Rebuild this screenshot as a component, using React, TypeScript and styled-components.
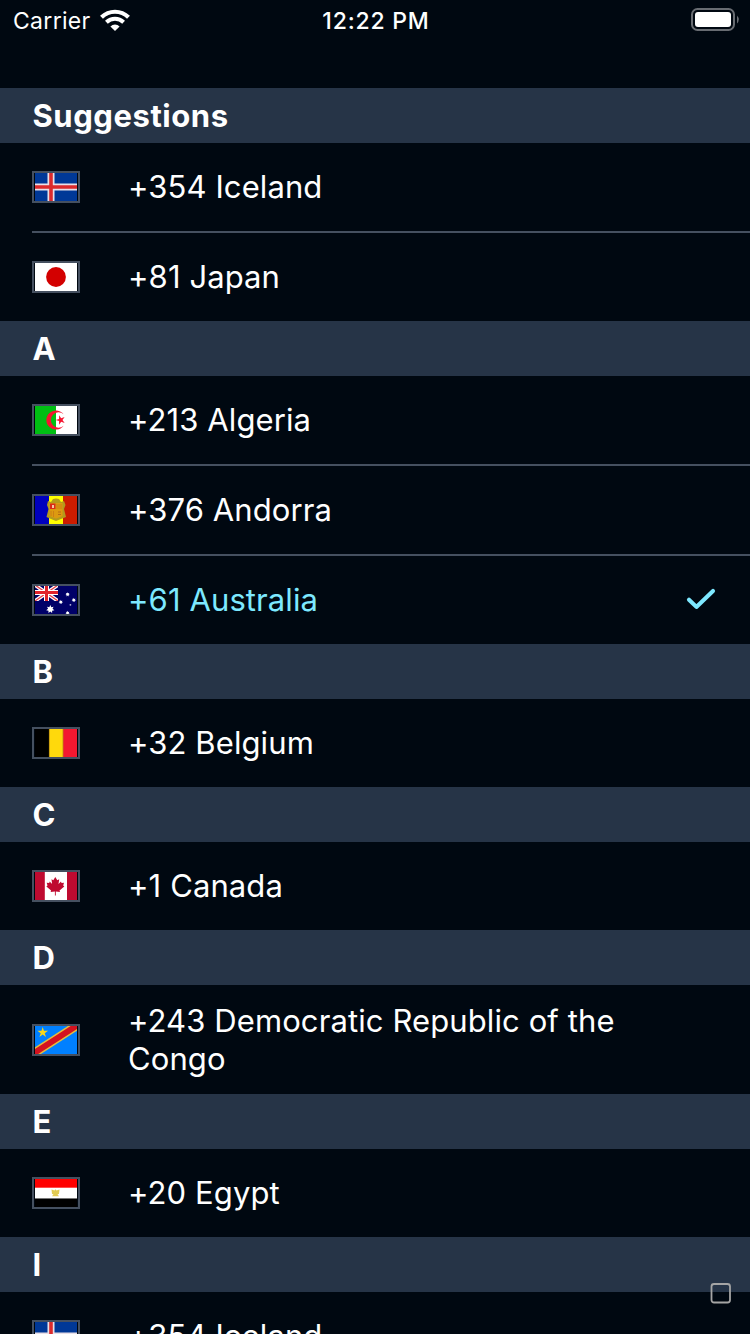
import React from "react";
import styled, { createGlobalStyle } from "styled-components";

const GlobalStyle = createGlobalStyle`
  html, body { margin: 0; background: #000811; overflow: hidden; }
  * { box-sizing: border-box; }
`;

const Screen = styled.main`
  width: 750px;
  height: 1334px;
  overflow: hidden;
  position: relative;
  background: #000811;
  color: #fff;
  font-family: Inter, "Liberation Sans", sans-serif;
`;

const StatusBar = styled.header`
  display: grid;
  grid-template-columns: 1fr auto 1fr;
  align-items: center;
  height: 40px;
  margin-bottom: 48px;
  padding: 0 11px 0 13px;
`;

const Carrier = styled.div`
  display: flex;
  align-items: center;
  gap: 9px;
  font-size: 23px;
  letter-spacing: 0.3px;
  line-height: 38px;
`;

const StatusText = styled.span`
  padding-top: 2px;
`;

const Clock = styled.div`
  padding-top: 2px;
  font-size: 23px;
  font-weight: 500;
  letter-spacing: 0.8px;
  line-height: 38px;
`;

const Battery = styled.svg`
  justify-self: end;
`;

const SectionTitle = styled.h2`
  margin: 0;
  height: 55px;
  padding: 0 32px 0 32.5px;
  background: #263447;
  font-size: 31px;
  font-weight: 700;
  letter-spacing: 0.55px;
  line-height: 55px;
`;

const Label = styled.span`
  flex: 1;
  font-size: 31px;
  line-height: 38px;
  letter-spacing: 0.1px;
`;

const Row = styled.li<{ $selected?: boolean }>`
  display: flex;
  align-items: center;
  min-height: 88px;
  padding: 16.5px 32px;
  color: ${(p) => (p.$selected ? "#7de8ff" : "#fff")};
`;

const List = styled.ul`
  margin: 0;
  padding: 0;
  list-style: none;
`;

const Separator = styled.li`
  height: 2px;
  margin-left: 32px;
  background: #455060;
`;

const FlagFrame = styled.span`
  display: flex;
  justify-content: center;
  width: 48px;
  height: 32px;
  margin-right: 48px;
  border: 2px solid #455060;
`;

const FlagSvg = styled.svg`
  display: block;
  width: 42px;
  height: 28px;
`;

const HomeBadge = styled.svg`
  position: absolute;
  left: 710px;
  top: 1282px;
`;

const starPoints = (cx: number, cy: number, outer: number, inner: number, n: number, turn = -90) =>
  Array.from({ length: n * 2 }, (_, i) => {
    const r = i % 2 ? inner : outer;
    const a = ((turn + (i * 180) / n) * Math.PI) / 180;
    return `${(cx + r * Math.cos(a)).toFixed(2)},${(cy + r * Math.sin(a)).toFixed(2)}`;
  }).join(" ");

const flags: Record<string, React.ReactNode> = {
  iceland: (
    <>
      <rect width="42" height="28" fill="#003897" />
      <path d="M16 0V28M0 14H42" stroke="#e8dfe8" strokeWidth="7" />
      <path d="M16 0V28M0 14H42" stroke="#dc2a2c" strokeWidth="3.6" />
    </>
  ),
  japan: (
    <>
      <rect width="42" height="28" fill="#fff" />
      <circle cx="21" cy="14" r="9.9" fill="#d30000" />
    </>
  ),
  algeria: (
    <>
      <rect width="42" height="28" fill="#fff" />
      <rect width="21" height="28" fill="#00bf13" />
      <path d="M28.6 8.2A9.6 9.6 0 1 0 28.6 19.8A7.7 7.7 0 1 1 28.6 8.2Z" fill="#f5142f" />
      <polygon points={starPoints(25.6, 14, 5, 1.9, 5, 180)} fill="#f5142f" />
    </>
  ),
  andorra: (
    <>
      <rect width="42" height="28" fill="#0000bd" />
      <rect x="14" width="14" height="28" fill="#ffff00" />
      <rect x="28" width="14" height="28" fill="#cc1c00" />
      <path d="M13 5L16 6L18 3L21 2.500L24 3L26 6L29 5L30.500 9L29 13L31 21L26 23L21 25L16 23L11.500 21L13.500 13L12 9Z" fill="#b49a1c" />
      <path d="M14.500 7H27.500V20L21 22.500L14.500 20Z" fill="#dc9a10" />
      <path d="M15 7.500H20.500V13H15Z" fill="#d92b18" />
      <path d="M17 9H19V12H17Z" fill="#f0c8a0" />
      <path d="M22 8V13M24 8V13M26 8V13M16 15V20M18.500 15V21" stroke="#c87814" strokeWidth=".8" />
      <path d="M23 16H26M23 18.500H26" stroke="#b46b16" />
    </>
  ),
  australia: (
    <>
      <rect width="42" height="28" fill="#000068" />
      <svg width="23" height="15" viewBox="0 0 23 15">
        <path d="M0 -1L23 15M0 15L23 -1" stroke="#fff" strokeWidth="3.800" />
        <path d="M0 -1L23 15M0 15L23 -1" stroke="#e64048" strokeWidth="1.300" />
        <path d="M11.500 0V15M0 6.500H23" stroke="#fff" strokeWidth="5" />
        <path d="M11.500 0V15M0 6.500H23" stroke="#e0242c" strokeWidth="3" />
      </svg>
      <polygon points={starPoints(15.3, 23.3, 4.2, 2.3, 7)} fill="#fff" />
      <polygon points={starPoints(32.6, 8.4, 2.2, 1.2, 7)} fill="#fff" />
      <polygon points={starPoints(25.8, 16, 2.2, 1.2, 7)} fill="#fff" />
      <polygon points={starPoints(38.8, 14, 2.2, 1.2, 7)} fill="#fff" />
      <polygon points={starPoints(32.6, 27, 2.2, 1.2, 7)} fill="#fff" />
      <circle cx="35.400" cy="18.800" r=".9" fill="#b9b9d8" />
    </>
  ),
  belgium: (
    <>
      <rect x="-1" width="15" height="28" fill="#000" />
      <rect x="14" width="14" height="28" fill="#ffd90c" />
      <rect x="28" width="14" height="28" fill="#f31830" />
      <path d="M14.400 0V28M28 0V28" stroke="#b98a12" strokeWidth=".8" />
    </>
  ),
  canada: (
    <>
      <rect width="42" height="28" fill="#bf0a30" />
      <rect x="9.800" width="22.200" height="28" fill="#fff" />
      <path d="M20.300 5L22.300 8.200L24.200 7.300L23.500 12L26 9.600L26.500 11L29 10.700L28.200 13.600L29.300 14.400L24.500 18.400L25 20L20.800 19.400V23.400H19.900V19.400L15.600 20L16.100 18.400L11.400 14.400L12.500 13.600L11.700 10.700L14.200 11L14.700 9.600L17.100 12L16.500 7.300L18.300 8.200Z" fill="#bf0a30" />
    </>
  ),
  congo: (
    <>
      <rect width="42" height="28" fill="#0080ff" />
      <path d="M-3 28.400L45 -2.400" stroke="#e6bd3c" strokeWidth="9" />
      <path d="M-3 28.400L45 -2.400" stroke="#d5121f" strokeWidth="6" />
      <polygon points={starPoints(7.7, 6.5, 5.6, 2.1, 5)} fill="#f8d818" />
    </>
  ),
  egypt: (
    <>
      <rect width="42" height="28" fill="#fff" />
      <rect width="42" height="8.700" fill="#f00" />
      <rect y="19" width="42" height="9" fill="#000" />
      <path d="M0 19.500H42" stroke="#777" strokeWidth="1" />
      <path d="M16.500 10.500L19.500 11.500L20.500 10.300L21.500 11.500L24.500 10.500L24 15L22.500 15.300L24 17.300H17L18.500 15.300L17 15Z" fill="#e2cb52" />
    </>
  ),
};

type Country = { flag: string; text: string; selected?: boolean };

const sections: { title: string; rows: Country[] }[] = [
  { title: "Suggestions", rows: [{ flag: "iceland", text: "+354 Iceland" }, { flag: "japan", text: "+81 Japan" }] },
  {
    title: "A",
    rows: [
      { flag: "algeria", text: "+213 Algeria" },
      { flag: "andorra", text: "+376 Andorra" },
      { flag: "australia", text: "+61 Australia", selected: true },
    ],
  },
  { title: "B", rows: [{ flag: "belgium", text: "+32 Belgium" }] },
  { title: "C", rows: [{ flag: "canada", text: "+1 Canada" }] },
  { title: "D", rows: [{ flag: "congo", text: "+243 Democratic Republic of the Congo" }] },
  { title: "E", rows: [{ flag: "egypt", text: "+20 Egypt" }] },
  { title: "I", rows: [{ flag: "iceland", text: "+354 Iceland" }] },
];

const Check = () => (
  <svg width="32" height="32" viewBox="0 0 32 32" fill="none">
    <path d="M3 15.700L10.400 22.900L27 6.900" stroke="#7de8ff" strokeWidth="4.100" strokeLinecap="round" strokeLinejoin="round" />
  </svg>
);

export default function App() {
  return (
    <Screen>
      <GlobalStyle />
      <StatusBar>
        <Carrier>
          <StatusText>Carrier</StatusText>
          <svg width="30" height="23" viewBox="0 0 30 23" fill="none" stroke="#fff">
            <path d="M1.500 8.200A19.500 19.500 0 0 1 28.500 8.200" strokeWidth="4.200" />
            <path d="M6.400 13.200A12.500 12.500 0 0 1 23.600 13.200" strokeWidth="4" />
            <path d="M10.400 17.400A6.800 6.800 0 0 1 19.600 17.400L15 22Z" fill="#fff" stroke="none" />
          </svg>
        </Carrier>
        <Clock>12:22 PM</Clock>
        <Battery width="48" height="24" viewBox="0 0 48 24">
          <rect x="1" y="1" width="42" height="21" rx="5.500" fill="none" stroke="#686c72" strokeWidth="2" />
          <rect x="4" y="4" width="36" height="15" rx="3" fill="#fff" />
          <path d="M46 7.500Q49.600 11.500 46 15.500Z" fill="#686c72" />
        </Battery>
      </StatusBar>
      {sections.map((s) => (
        <section key={s.title}>
          <SectionTitle>{s.title}</SectionTitle>
          <List>
            {s.rows.map((r, i) => (
              <React.Fragment key={r.text}>
                {i > 0 && <Separator />}
                <Row $selected={r.selected}>
                  <FlagFrame>
                    <FlagSvg viewBox="0 0 42 28">{flags[r.flag]}</FlagSvg>
                  </FlagFrame>
                  <Label>{r.text}</Label>
                  {r.selected && <Check />}
                </Row>
              </React.Fragment>
            ))}
          </List>
        </section>
      ))}
      <HomeBadge width="22" height="22" viewBox="0 0 22 22">
        <rect x="1.500" y="2" width="18.500" height="18.500" rx="2.500" fill="none" stroke="#a5a5a5" strokeWidth="1.800" />
      </HomeBadge>
    </Screen>
  );
}
